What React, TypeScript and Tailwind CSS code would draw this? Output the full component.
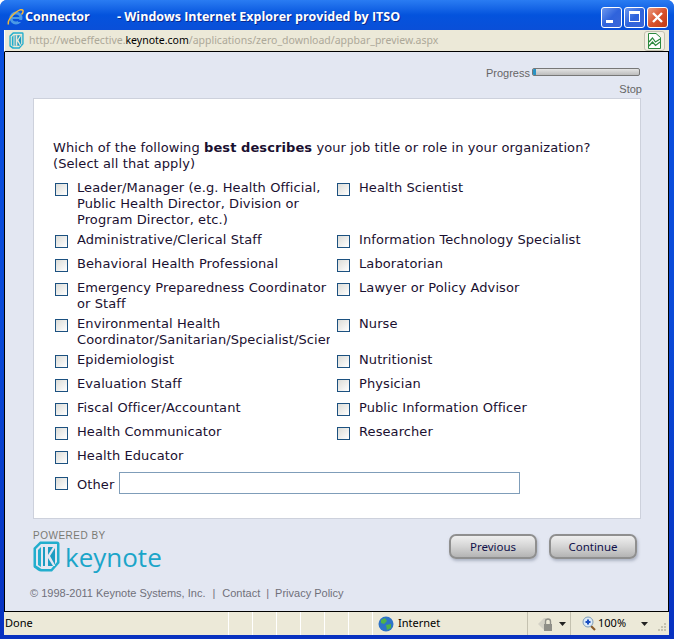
const leftOptions = [
  "Leader/Manager (e.g. Health Official, Public Health Director, Division or Program Director, etc.)",
  "Administrative/Clerical Staff",
  "Behavioral Health Professional",
  "Emergency Preparedness Coordinator or Staff",
  "Environmental Health Coordinator/Sanitarian/Specialist/Scientist",
  "Epidemiologist",
  "Evaluation Staff",
  "Fiscal Officer/Accountant",
  "Health Communicator",
  "Health Educator",
];

const rightOptions = [
  "Health Scientist",
  "Information Technology Specialist",
  "Laboratorian",
  "Lawyer or Policy Advisor",
  "Nurse",
  "Nutritionist",
  "Physician",
  "Public Information Officer",
  "Researcher",
  "",
];

function Checkbox() {
  return (
    <span className="mt-[3px] block h-[13px] w-[13px] shrink-0 border border-[#1c5180] bg-gradient-to-br from-[#dcdcd7] to-[#ffffff]" />
  );
}

function KeynoteMark({ width, height, bg }: { width: number; height: number; bg: string }) {
  return (
    <svg width={width} height={height} viewBox="0 0 27 31" className="shrink-0">
      <path d="M7 0.5 H24 Q26.5 0.5 26.5 3 V22 L19 30.5 H8 Q6.5 30.5 5 29.5 L1 26.5 Q0.5 26 0.5 25 V7 Z" fill="#22aecd" />
      <path d="M8 3 H24 V21 L18 28 H8.5 L3 24.5 V8 Z" fill={bg} />
      <path d="M5 9 L8 6 V26 L5 24 Z" fill="#22aecd" />
      <rect x="10" y="6" width="12" height="19" fill="#1b9cc2" />
      <path d="M12 6 H15 V14 L20 6 H22 V7 L17 15 L22 24 V25 H20 L15 17 V25 H12 Z" fill={bg} />
    </svg>
  );
}

function CaptionButton({ kind }: { kind: "min" | "max" | "close" }) {
  const bg =
    kind === "close"
      ? "bg-gradient-to-br from-[#e89a80] via-[#d9522c] to-[#c03a14]"
      : "bg-gradient-to-br from-[#6d97ee] via-[#2f63dc] to-[#3a66d8]";
  return (
    <div className={`relative h-[21px] w-[21px] rounded-[3px] border border-white ${bg}`}>
      {kind === "min" && <span className="absolute bottom-[4px] left-[4px] h-[3px] w-[7px] bg-white" />}
      {kind === "max" && <span className="absolute left-[4px] top-[3px] h-[11px] w-[11px] border border-t-[3px] border-white" />}
      {kind === "close" && (
        <svg className="absolute left-[3px] top-[3px]" width="13" height="13" viewBox="0 0 13 13">
          <path d="M2 2 L11 11 M11 2 L2 11" stroke="#fff" strokeWidth="2.4" />
        </svg>
      )}
    </div>
  );
}

function XpButton({ label }: { label: string }) {
  return (
    <button className="h-[25px] w-[88px] rounded-[7px] border-2 border-[#8f8f8f] bg-gradient-to-b from-[#efefef] via-[#d4d4d4] to-[#b4b4b4] text-[11.5px] text-[#10104a] shadow-[1px_2px_3px_rgba(120,130,150,0.5)] [font-family:'Noto_Sans',sans-serif]">
      {label}
    </button>
  );
}

function DownArrow() {
  return (
    <svg width="7" height="4" viewBox="0 0 7 4" className="shrink-0">
      <path d="M0 0 H7 L3.5 4 Z" fill="#222" />
    </svg>
  );
}

export default function App() {
  return (
    <div className="flex h-[639px] w-[674px] flex-col overflow-hidden rounded-t-[7px] bg-gradient-to-b from-[#0a50e0] via-[#0a4ad8] to-[#0831c0] [font-family:'DejaVu_Sans',sans-serif]">
      {/* title bar */}
      <div className="flex h-[30px] shrink-0 items-center bg-gradient-to-b from-[#2a7cf2] via-[#0453dd] to-[#0a4fd8] pl-[7px] pr-[6px] pt-[5px]">
        <svg width="17" height="17" viewBox="0 0 17 17" className="shrink-0">
          <circle cx="9" cy="9" r="5" fill="none" stroke="#4a9ae6" strokeWidth="3" />
          <path d="M5 9 H14" stroke="#4a9ae6" strokeWidth="2" />
          <path d="M11 11 H15.5 V13 H11 Z" fill="#0a50e0" />
          <path d="M1.5 15.5 Q0 11 8 4 Q14 -1 16 1.5 Q16.5 3.5 14.5 5.5" fill="none" stroke="#f2b83a" strokeWidth="1.5" />
        </svg>
        <span className="ml-[1px] w-[92px] text-[12.5px] font-bold text-white [font-family:'Open_Sans',sans-serif] [text-shadow:1px_1px_0_#0a2a90]">
          Connector
        </span>
        <span className="text-[12.5px] font-bold text-white [font-family:'Open_Sans',sans-serif] [text-shadow:1px_1px_0_#0a2a90]">
          - Windows Internet Explorer provided by ITSO
        </span>
        <div className="ml-auto flex gap-[2px]">
          <CaptionButton kind="min" />
          <CaptionButton kind="max" />
          <CaptionButton kind="close" />
        </div>
      </div>

      <div className="flex min-h-0 flex-1 flex-col px-[4px] pr-[5px] pb-[4px]">
        {/* address bar */}
        <div className="flex h-[22px] shrink-0 items-center border-b border-black border-l border-l-white bg-[#ece9d8] pl-[4px]">
          <KeynoteMark width={15} height={17} bg="#ece9d8" />
          <span className="ml-[5px] text-[10.5px] text-[#aca899] [font-family:'Noto_Sans',sans-serif]">
            http://webeffective.<span className="text-black">keynote.com</span>/applications/zero_download/appbar_preview.aspx
          </span>
          <div className="ml-auto mr-[4px] flex h-[20px] w-[21px] items-center justify-center rounded-[3px] border border-[#c4c1b0] bg-[#f3f1e6]">
            <svg width="13" height="16" viewBox="0 0 13 16">
              <path d="M0.5 0.5 H8 L12.5 4.5 V15.5 H0.5 Z" fill="#fff" stroke="#2b8a3e" />
              <path d="M1 9 L4.5 5 L7.5 9 L12 6 M1 13 L4.5 9 L7.5 12.5 L12 9" fill="none" stroke="#2b8a3e" strokeWidth="1.2" />
            </svg>
          </div>
        </div>

        {/* page */}
        <div className="flex min-h-0 flex-1 flex-col border-x border-b border-black bg-[#e3e7f2]">
          <div className="flex items-center justify-end pt-[14px] pr-[28px] text-[11px] leading-[14px] text-[#666] [font-family:'Liberation_Sans',sans-serif]">
            <span className="mr-[2px]">Progress</span>
            <div className="relative -mt-[2px] h-[8px] w-[108px] overflow-hidden rounded-[2px] border border-[#777] bg-gradient-to-b from-[#e4e4e4] to-[#bcbcbc]">
              <span className="absolute left-0 top-0 h-full w-[3px] bg-[#2a93c4]" />
            </div>
          </div>
          <div className="pt-[2px] pr-[26px] text-right text-[11px] leading-[14px] text-[#666] [font-family:'Liberation_Sans',sans-serif]">
            Stop
          </div>

          {/* question card */}
          <div className="ml-[28px] mt-[2px] h-[421px] w-[608px] shrink-0 border border-[#cdd1dc] bg-white pl-[19px] pt-[41px] text-[13px] leading-[16px] tracking-[0.09px] text-[#1a1030]">
            <p>
              Which of the following <b>best describes</b> your job title or role in your organization?
              <br />
              (Select all that apply)
            </p>
            <div className="mt-[8px] grid grid-cols-[282px_1fr] pl-[2px]">
              {leftOptions.map((label, i) => (
                <div key={label} className="contents">
                  <div className="flex min-h-[24px] gap-[9px] pb-[4px]">
                    <Checkbox />
                    <span className="block w-[253px] overflow-hidden">{label}</span>
                  </div>
                  <div className="flex min-h-[24px] gap-[9px] pb-[4px]">
                    {rightOptions[i] && (
                      <>
                        <Checkbox />
                        <span>{rightOptions[i]}</span>
                      </>
                    )}
                  </div>
                </div>
              ))}
            </div>
            <div className="flex items-center pl-[2px]">
              <span className="-mt-[3px]">
                <Checkbox />
              </span>
              <span className="ml-[9px] mt-[4px]">Other</span>
              <input className="ml-[5px] h-[22px] w-[401px] border border-[#7f9db9] bg-white" />
            </div>
          </div>

          {/* footer */}
          <div className="relative flex flex-1 flex-col pl-[28px] pt-[11px]">
            <div className="text-[10px] leading-[11px] tracking-[0.5px] text-[#7a7a72] [font-family:'Liberation_Sans',sans-serif]">POWERED BY</div>
            <div className="flex items-center gap-[5px]">
              <KeynoteMark width={27} height={31} bg="#e3e7f2" />
              <span className="text-[26px] font-medium leading-[30px] text-[#1ba5c9] [font-family:'Open_Sans',sans-serif]">keynote</span>
            </div>
            <div className="absolute right-[31px] top-[15px] flex gap-[12px]">
              <XpButton label="Previous" />
              <XpButton label="Continue" />
            </div>
            <div className="-ml-[3px] mt-[13px] text-[11px] text-[#70707a] [font-family:'Liberation_Sans',sans-serif]">
              © 1998-2011 Keynote Systems, Inc.<span className="mx-[7px]">|</span>Contact<span className="mx-[6px]">|</span>Privacy Policy
            </div>
          </div>
        </div>

        {/* status bar */}
        <div className="flex h-[23px] shrink-0 items-center bg-[#ece9d8] text-[11px] text-black [font-family:'Noto_Sans',sans-serif]">
          <div className="flex h-full w-[225px] items-center border-r border-white pl-[1px]">Done</div>
          <div className="h-full w-[24px] border-r border-white" />
          <div className="h-full w-[24px] border-r border-white" />
          <div className="h-full w-[24px] border-r border-white" />
          <div className="h-full w-[24px] border-r border-white" />
          <div className="h-full w-[24px] border-r border-white" />
          <div className="h-full w-[24px] border-r border-white" />
          <div className="flex h-full w-[155px] items-center gap-[4px] border-r border-[#c4c1b0] pl-[5px]">
            <svg width="16" height="16" viewBox="0 0 16 16" className="shrink-0">
              <circle cx="8" cy="8" r="7.5" fill="#2d73c8" />
              <path d="M3 4 L7 2 L9 5 L6 8 L3 7 Z M8 9 L13 8 L13 12 L9 14 Z" fill="#4fb24a" />
            </svg>
            <span>Internet</span>
          </div>
          <div className="flex h-full w-[43px] items-center gap-[6px] border-r border-[#c4c1b0] pl-[9px]">
            <svg width="16" height="16" viewBox="0 0 16 16" className="shrink-0">
              <path d="M1 8 L7 2 H9 V14 H7 Z" fill="#d4d2c6" />
              <rect x="7" y="8" width="8" height="7" fill="#8f8f88" />
              <path d="M8.5 8 V5.5 A2.5 2.5 0 0 1 13.5 5.5 V8" fill="none" stroke="#8f8f88" strokeWidth="1.4" />
            </svg>
            <DownArrow />
          </div>
          <div className="flex h-full flex-1 items-center pl-[11px]">
            <svg width="14" height="15" viewBox="0 0 14 15" className="shrink-0">
              <path d="M9 10 L13 14" stroke="#8a5a2a" strokeWidth="2.2" />
              <circle cx="6" cy="6" r="5" fill="#dceaf8" stroke="#7f9db9" />
              <path d="M3.5 6 H8.5 M6 3.5 V8.5" stroke="#1c4fc0" strokeWidth="2" />
            </svg>
            <span className="ml-[2px]">100%</span>
            <span className="ml-[15px]">
              <DownArrow />
            </span>
            <svg width="10" height="10" viewBox="0 0 10 10" className="ml-auto mr-[2px] mt-[6px] shrink-0">
              <path d="M7 1 h2 v2 h-2 Z M4 4 h2 v2 h-2 Z M7 4 h2 v2 h-2 Z M1 7 h2 v2 h-2 Z M4 7 h2 v2 h-2 Z M7 7 h2 v2 h-2 Z" fill="#c4c1b0" />
            </svg>
          </div>
        </div>
      </div>
    </div>
  );
}
